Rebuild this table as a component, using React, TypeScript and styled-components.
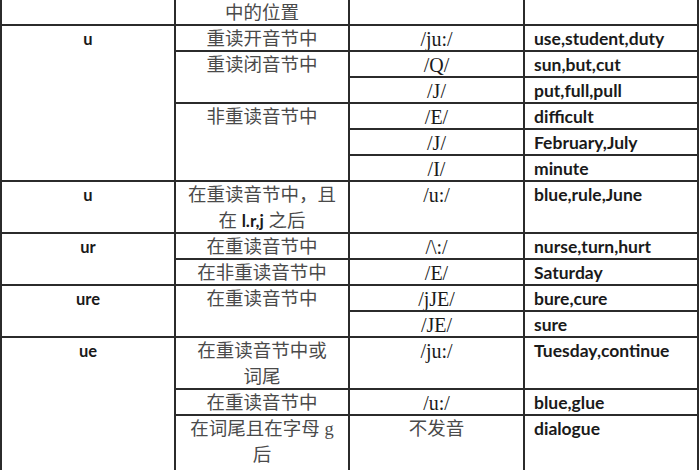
import React from 'react';
import styled, { createGlobalStyle } from 'styled-components';

const GlobalStyle = createGlobalStyle`
  html, body {
    margin: 0;
    padding: 0;
    background: #ffffff;
    overflow: hidden;
  }
`;

const Sheet = styled.div`
  display: grid;
  grid-template-columns: 174px 174px 175px 174px;
  grid-template-rows: 26px repeat(16, 26px) 32px;
  width: 697px;
  border-left: 2px solid #2b2b2b;
  background: #fff;
`;

type Kind = 'letter' | 'cn' | 'ipa' | 'word';

const fonts: Record<Kind, string> = {
  letter: 'Lato, "Liberation Sans", sans-serif',
  cn: '"Liberation Serif", "Noto Sans CJK SC", serif',
  ipa: '"Liberation Serif", serif',
  word: 'Lato, "Liberation Sans", sans-serif',
};

const sizes: Record<Kind, string> = {
  letter: '16.5px',
  cn: '18.5px',
  ipa: '20px',
  word: '17.5px',
};

const Cell = styled.div<{ $col: number; $row: number; $span?: number; $kind: Kind }>`
  grid-column: ${p => p.$col};
  grid-row: ${p => p.$row} / span ${p => p.$span ?? 1};
  border-right: 2px solid #2b2b2b;
  border-bottom: 2px solid #2b2b2b;
  overflow: hidden;
  box-sizing: border-box;
  text-align: ${p => (p.$kind === 'word' ? 'left' : 'center')};
  padding-left: ${p => (p.$kind === 'word' ? '9px' : '0')};
  white-space: nowrap;
  color: ${p => (p.$kind === 'cn' ? '#4a4a4a' : '#1a1a1a')};
  font-family: ${p => fonts[p.$kind]};
  font-size: ${p => sizes[p.$kind]};
  font-weight: ${p => (p.$kind === 'letter' || p.$kind === 'word' ? 700 : 400)};
`;

const Line = styled.div`
  line-height: 26px;
`;

const Bold = styled.span`
  font-family: Lato, "Liberation Sans", sans-serif;
  font-weight: 700;
  font-size: 17px;
  color: #1a1a1a;
`;

type Item = { col: number; row: number; span?: number; kind: Kind; text: React.ReactNode };

const items: Item[] = [
  // column 1: letters
  { col: 1, row: 1, kind: 'letter', text: '' },
  { col: 1, row: 2, span: 6, kind: 'letter', text: 'u' },
  { col: 1, row: 8, span: 2, kind: 'letter', text: 'u' },
  { col: 1, row: 10, span: 2, kind: 'letter', text: 'ur' },
  { col: 1, row: 12, span: 2, kind: 'letter', text: 'ure' },
  { col: 1, row: 14, span: 5, kind: 'letter', text: 'ue' },

  // column 2: position in word
  { col: 2, row: 1, kind: 'cn', text: '中的位置' },
  { col: 2, row: 2, kind: 'cn', text: '重读开音节中' },
  { col: 2, row: 3, span: 2, kind: 'cn', text: '重读闭音节中' },
  { col: 2, row: 5, span: 3, kind: 'cn', text: '非重读音节中' },
  {
    col: 2, row: 8, span: 2, kind: 'cn',
    text: (
      <>
        <Line>在重读音节中，且</Line>
        <Line>在 <Bold>l.r,j</Bold> 之后</Line>
      </>
    ),
  },
  { col: 2, row: 10, kind: 'cn', text: '在重读音节中' },
  { col: 2, row: 11, kind: 'cn', text: '在非重读音节中' },
  { col: 2, row: 12, span: 2, kind: 'cn', text: '在重读音节中' },
  {
    col: 2, row: 14, span: 2, kind: 'cn',
    text: (
      <>
        <Line>在重读音节中或</Line>
        <Line>词尾</Line>
      </>
    ),
  },
  { col: 2, row: 16, kind: 'cn', text: '在重读音节中' },
  {
    col: 2, row: 17, span: 2, kind: 'cn',
    text: (
      <>
        <Line>在词尾且在字母 g</Line>
        <Line>后</Line>
      </>
    ),
  },

  // column 3: sound
  { col: 3, row: 1, kind: 'ipa', text: '' },
  { col: 3, row: 2, kind: 'ipa', text: '/ju:/' },
  { col: 3, row: 3, kind: 'ipa', text: '/Q/' },
  { col: 3, row: 4, kind: 'ipa', text: '/J/' },
  { col: 3, row: 5, kind: 'ipa', text: '/E/' },
  { col: 3, row: 6, kind: 'ipa', text: '/J/' },
  { col: 3, row: 7, kind: 'ipa', text: '/I/' },
  { col: 3, row: 8, span: 2, kind: 'ipa', text: '/u:/' },
  { col: 3, row: 10, kind: 'ipa', text: '/\\:/' },
  { col: 3, row: 11, kind: 'ipa', text: '/E/' },
  { col: 3, row: 12, kind: 'ipa', text: '/jJE/' },
  { col: 3, row: 13, kind: 'ipa', text: '/JE/' },
  { col: 3, row: 14, span: 2, kind: 'ipa', text: '/ju:/' },
  { col: 3, row: 16, kind: 'ipa', text: '/u:/' },
  { col: 3, row: 17, span: 2, kind: 'cn', text: '不发音' },

  // column 4: examples
  { col: 4, row: 1, kind: 'word', text: '' },
  { col: 4, row: 2, kind: 'word', text: 'use,student,duty' },
  { col: 4, row: 3, kind: 'word', text: 'sun,but,cut' },
  { col: 4, row: 4, kind: 'word', text: 'put,full,pull' },
  { col: 4, row: 5, kind: 'word', text: 'difficult' },
  { col: 4, row: 6, kind: 'word', text: 'February,July' },
  { col: 4, row: 7, kind: 'word', text: 'minute' },
  { col: 4, row: 8, span: 2, kind: 'word', text: 'blue,rule,June' },
  { col: 4, row: 10, kind: 'word', text: 'nurse,turn,hurt' },
  { col: 4, row: 11, kind: 'word', text: 'Saturday' },
  { col: 4, row: 12, kind: 'word', text: 'bure,cure' },
  { col: 4, row: 13, kind: 'word', text: 'sure' },
  { col: 4, row: 14, span: 2, kind: 'word', text: 'Tuesday,continue' },
  { col: 4, row: 16, kind: 'word', text: 'blue,glue' },
  { col: 4, row: 17, span: 2, kind: 'word', text: 'dialogue' },
];

const App: React.FC = () => {
  return (
    <>
      <GlobalStyle />
      <Sheet>
        {items.map((it, i) => (
          <Cell key={i} $col={it.col} $row={it.row} $span={it.span} $kind={it.kind}>
            {typeof it.text === 'string' ? <Line>{it.text}</Line> : it.text}
          </Cell>
        ))}
      </Sheet>
    </>
  );
};

export default App;
